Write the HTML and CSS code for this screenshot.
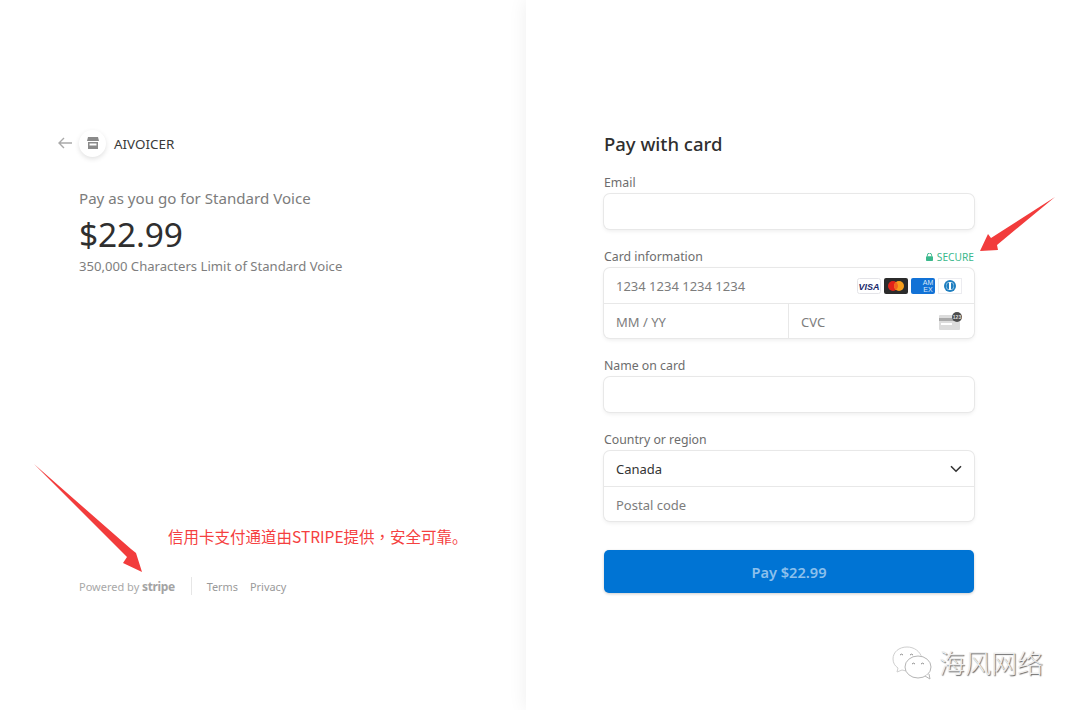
FILE: index.html
```html
<!DOCTYPE html>
<html lang="en">

<head>
  <meta charset="UTF-8">
  <title>Pay with card</title>
  <link rel="stylesheet" href="styles.css">
</head>

<body>
  <div class="page">
    <div class="summary">
      <div class="merchant">
        <svg class="back" width="14" height="12" viewBox="0 0 14 12"><path d="M6 1 1 6l5 5M1 6h13" fill="none" stroke="#a9a9a9" stroke-width="1.4"/></svg>
        <div class="logo">
          <svg width="12" height="12" viewBox="0 0 12 12"><path d="M1 0h10l1 4H0z M1 5h10v7H1z" fill="#8a8a8a"/><path d="M2.5 6.5h7v2h-7z" fill="#fff"/></svg>
        </div>
        <span class="merchant-name">AIVOICER</span>
      </div>
      <div class="product">
        <div class="product-name">Pay as you go for Standard Voice</div>
        <div class="price">$22.99</div>
        <div class="product-desc">350,000 Characters Limit of Standard Voice</div>
      </div>
      <div class="foot">
        <span class="powered">Powered by <b class="stripe">stripe</b></span>
        <span class="foot-links"><a>Terms</a><a>Privacy</a></span>
      </div>
    </div>

    <div class="checkout">
      <form class="card-form">
        <h1>Pay with card</h1>

        <div class="field">
          <div class="label-row"><label>Email</label></div>
          <div class="box"><div class="row"></div></div>
        </div>

        <div class="field">
          <div class="label-row">
            <label>Card information</label>
            <span class="secure">
              <svg width="7" height="8" viewBox="0 0 7 8"><path d="M1.4 3.4V2.2a2.1 2.1 0 0 1 4.2 0v1.2" fill="none" stroke="#3ab88c" stroke-width="1"/><rect y="3.2" width="7" height="4.8" rx=".8" fill="#3ab88c"/></svg>
              SECURE
            </span>
          </div>
          <div class="box">
            <div class="row">
              <span class="placeholder">1234 1234 1234 1234</span>
              <span class="brands">
                <svg width="24" height="16" viewBox="0 0 24 16"><rect x=".5" y=".5" width="23" height="15" rx="2" fill="#fff" stroke="#e4e4e8"/><text x="12" y="11.6" text-anchor="middle" class="visa-text">VISA</text></svg>
                <svg width="24" height="16" viewBox="0 0 24 16"><rect width="24" height="16" rx="2" fill="#2b2b2b"/><circle cx="9" cy="8" r="5" fill="#e2231a"/><circle cx="15" cy="8" r="5" fill="#f79e1b"/><path d="M12 4a5 5 0 0 1 0 8 5 5 0 0 1 0-8z" fill="#f2641f"/></svg>
                <svg width="24" height="16" viewBox="0 0 24 16"><rect width="24" height="16" rx="2" fill="#1272d6"/><text x="17" y="7" text-anchor="middle" class="amex-text">AM</text><text x="17" y="13.5" text-anchor="middle" class="amex-text">EX</text></svg>
                <svg width="24" height="16" viewBox="0 0 24 16"><rect x=".5" y=".5" width="23" height="15" fill="#fff" stroke="#ececf0"/><circle cx="12" cy="8" r="6" fill="#1f7fc0"/><circle cx="12" cy="8" r="4" fill="#fff"/><path d="M11 4.5v7a3.6 3.6 0 0 1 0-7zM13 4.5a3.6 3.6 0 0 1 0 7z" fill="#1f7fc0"/></svg>
              </span>
            </div>
            <div class="row split">
              <div class="cell"><span class="placeholder">MM / YY</span></div>
              <div class="cell">
                <span class="placeholder">CVC</span>
                <svg class="cvc-icon" width="24" height="18" viewBox="0 0 24 18"><rect y="3" width="21" height="15" rx="1" fill="#dcdcdc"/><rect y="6" width="21" height="3" fill="#a9a9a9"/><rect x="2" y="11" width="11" height="2" fill="#fff"/><circle cx="18" cy="5" r="5" fill="#4d4d4d"/><text x="18" y="6.8" text-anchor="middle" class="cvc-text">123</text></svg>
              </div>
            </div>
          </div>
        </div>

        <div class="field">
          <div class="label-row"><label>Name on card</label></div>
          <div class="box"><div class="row"></div></div>
        </div>

        <div class="field">
          <div class="label-row"><label>Country or region</label></div>
          <div class="box">
            <div class="row">
              <span class="value">Canada</span>
              <svg class="chevron" width="12" height="8" viewBox="0 0 12 8"><path d="M1 1.2 6 6.2l5-5" fill="none" stroke="#333" stroke-width="1.6"/></svg>
            </div>
            <div class="row"><span class="placeholder">Postal code</span></div>
          </div>
        </div>

        <button type="button" class="pay">Pay $22.99</button>
      </form>
    </div>
  </div>

  <!-- annotations on top of the screenshot -->
  <svg class="arrows" width="1080" height="710" viewBox="0 0 1080 710">
    <path d="M34 464 131 549 136 553 142 572 123 563 127 557z" fill="#f23c3c"/>
    <path d="M1055 197 997 245 998 250 980 251 988 234 991 238z" fill="#f23c3c"/>
  </svg>
  <div class="note">信用卡支付通道由STRIPE提供<span class="comma">，</span>安全可靠。</div>
  <div class="watermark">
    <svg width="44" height="36" viewBox="0 0 44 36">
      <path d="M17 3C9 3 3 8 3 15c0 4 2 7 5 9l-1 4 5-2c2 .6 4 1 6 .8M32 14C30 7 24 3 17 3" fill="#fff" stroke="#cfcfcf" stroke-width="1"/>
      <ellipse cx="28" cy="23" rx="13" ry="11" fill="#fff" stroke="#b5b5b5" stroke-width="1"/>
      <path d="M35 32l5 3-1-5" fill="#fff" stroke="#b5b5b5" stroke-width="1"/>
      <path d="M10 11a2 2 0 0 1 3 0M20 11a2 2 0 0 1 3 0M22 20a2 2 0 0 1 3 0M31 20a2 2 0 0 1 3 0" fill="none" stroke="#8c8c8c" stroke-width="1"/>
    </svg>
    <span class="watermark-text">海风网络</span>
  </div>
</body>

</html>
```

FILE: styles.css
```css
* {
  box-sizing: border-box;
}

html,
body {
  margin: 0;
  height: 710px;
  overflow: hidden;
  background: #fff;
}

body {
  font-family: "Noto Sans", "Open Sans", "Noto Sans CJK SC", sans-serif;
  color: #333;
}

.page {
  display: flex;
  height: 710px;
}

/* left column */
.summary {
  width: 526px;
  padding: 129px 0 115px 58px;
  display: flex;
  flex-direction: column;
}

.merchant {
  display: flex;
  align-items: center;
  height: 28px;
}

.back {
  margin-right: 7px;
}

.logo {
  width: 27px;
  height: 27px;
  border-radius: 50%;
  background: #fff;
  box-shadow: 0 2px 5px rgba(0, 0, 0, .12);
  display: flex;
  align-items: center;
  justify-content: center;
}

.merchant-name {
  margin: 1px 0 0 8px;
  font-size: 13.4px;
  color: #3a3a3a;
}

.product {
  margin: 31px 0 0 21px;
}

.product-name {
  font-size: 15.1px;
  line-height: 20px;
  margin-bottom: 3px;
  color: #7c7c7c;
}

.price {
  font-size: 33.5px;
  line-height: 46px;
  color: #2f2f2f;
  letter-spacing: -.2px;
}

.product-desc {
  font-size: 13.1px;
  line-height: 18px;
  color: #7e7e7e;
}

.foot {
  margin-top: auto;
  margin-left: 21px;
  display: flex;
  align-items: center;
  height: 18px;
  font-size: 11px;
  color: #a8a8a8;
}

.powered {
  padding-right: 16px;
  border-right: 1px solid #e6e6e6;
  height: 18px;
  line-height: 20px;
}

.stripe {
  font-size: 12px;
  font-weight: 700;
  letter-spacing: -.4px;
  color: #a3a3a3;
}

.foot-links {
  margin-left: 15px;
  display: flex;
  gap: 12px;
  font-size: 10.9px;
  color: #9a9a9a;
}

/* right column */
.checkout {
  flex: 1;
  position: relative;
  background: #fff;
  padding: 129px 0 0 78px;
  box-shadow: 0 0 18px rgba(0, 0, 0, .07);
}

.card-form {
  width: 370px;
}

h1 {
  margin: 0 0 14px;
  font-size: 18.5px;
  font-weight: 500;
  line-height: 30px;
  color: #2f2f2f;
}

.field {
  margin-bottom: 18px;
}

.label-row {
  display: flex;
  justify-content: space-between;
  align-items: center;
  height: 18px;
  margin-bottom: 3px;
}

label {
  font-size: 12.3px;
  color: #6d6d6d;
}

.secure {
  display: flex;
  align-items: center;
  gap: 4px;
  font-size: 10.2px;
  color: #3ab88c;
  margin-top: 2px;
}

.box {
  border-radius: 6px;
  background: #fff;
  box-shadow: 0 0 0 1px #e8e8e8, 0 2px 4px rgba(0, 0, 0, .08);
}

.row {
  display: flex;
  align-items: center;
  justify-content: space-between;
  height: 35px;
  padding: 1px 12px 0;
  font-size: 13px;
}

.row + .row {
  border-top: 1px solid #e8e8e8;
}

.placeholder {
  color: #7d7d7d;
}

.value {
  color: #333;
}

.brands {
  display: flex;
  gap: 3px;
  margin-top: -1px;
}

.brands svg {
  display: block;
}

.visa-text {
  font: italic 700 9px "Liberation Sans", sans-serif;
  fill: #1a2a6c;
}

.amex-text {
  font: 400 7px "Liberation Sans", sans-serif;
  fill: #dce9f8;
}

.cvc-text {
  font: 700 5px "Liberation Sans", sans-serif;
  fill: #ddd;
}

.split {
  padding: 0;
}

.cell {
  width: 184px;
  height: 100%;
  display: flex;
  align-items: center;
  justify-content: space-between;
  padding: 1px 12px 0;
}

.cell + .cell {
  flex: 1;
  border-left: 1px solid #e8e8e8;
}

.cvc-icon {
  margin: -2px -1px 0 0;
}

.pay {
  display: block;
  width: 100%;
  height: 43px;
  margin-top: 29px;
  border: 0;
  border-radius: 5px;
  background: #0074d4;
  box-shadow: 0 1px 3px rgba(0, 0, 0, .2);
  color: #8cc0ec;
  font-family: inherit;
  font-size: 14.6px;
  font-weight: 600;
}

/* annotations */
.arrows {
  position: absolute;
  left: 0;
  top: 0;
}

.note {
  position: absolute;
  left: 168px;
  top: 525px;
  font-family: "Noto Sans CJK SC", sans-serif;
  font-size: 15.5px;
  line-height: 22px;
  color: #f54040;
  white-space: nowrap;
}

.comma {
  font-family: "Noto Sans CJK TC", sans-serif;
}

.watermark {
  position: absolute;
  left: 890px;
  top: 644px;
  display: flex;
  align-items: center;
  gap: 5px;
}

.watermark-text {
  font-family: "Noto Sans CJK SC", sans-serif;
  font-size: 26px;
  font-weight: 300;
  line-height: 36px;
  color: #eeeeee;
  text-shadow: 1px 1px 1px #666;
}
```
